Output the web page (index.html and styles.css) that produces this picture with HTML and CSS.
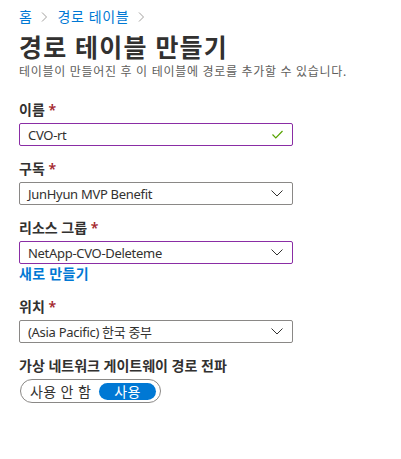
FILE: index.html
```html
<!DOCTYPE html>
<html lang="ko">
<head>
    <meta charset="UTF-8">
    <meta name="viewport" content="width=device-width, initial-scale=1.0">
    <title>경로 테이블 만들기</title>
    <link rel="stylesheet" href="styles.css">
</head>
<body>
    <div class="page">
        <nav class="breadcrumb">
            <a href="#">홈</a>
            <svg class="sep" width="7" height="10" viewBox="0 0 7 10"><path d="M1 0.5 L5.5 5 L1 9.5" fill="none" stroke="#a19f9d" stroke-width="1"/></svg>
            <a href="#">경로 테이블</a>
            <svg class="sep" width="7" height="10" viewBox="0 0 7 10"><path d="M1 0.5 L5.5 5 L1 9.5" fill="none" stroke="#a19f9d" stroke-width="1"/></svg>
        </nav>
        <h1 class="title">경로 테이블 만들기</h1>
        <p class="subtitle">테이블이 만들어진 후 이 테이블에 경로를 추가할 수 있습니다.</p>

        <div class="field">
            <label class="label">이름 <span class="req">*</span></label>
            <div class="box box-active">
                <span class="value">CVO-rt</span>
                <svg class="icon" width="11" height="9" viewBox="0 0 11 9"><path d="M0.5 4.5 L3.8 7.8 L10.5 1" fill="none" stroke="#57a300" stroke-width="1.2"/></svg>
            </div>
        </div>

        <div class="field">
            <label class="label">구독 <span class="req">*</span></label>
            <div class="box">
                <span class="value">JunHyun MVP Benefit</span>
                <svg class="icon" width="12" height="7" viewBox="0 0 12 7"><path d="M0.5 0.5 L6 6 L11.5 0.5" fill="none" stroke="#323130" stroke-width="1"/></svg>
            </div>
        </div>

        <div class="field">
            <label class="label">리소스 그룹 <span class="req">*</span></label>
            <div class="box box-active">
                <span class="value">NetApp-CVO-Deleteme</span>
                <svg class="icon" width="12" height="7" viewBox="0 0 12 7"><path d="M0.5 0.5 L6 6 L11.5 0.5" fill="none" stroke="#323130" stroke-width="1"/></svg>
            </div>
            <a class="link" href="#">새로 만들기</a>
        </div>

        <div class="field">
            <label class="label">위치 <span class="req">*</span></label>
            <div class="box">
                <span class="value">(Asia Pacific) 한국 중부</span>
                <svg class="icon" width="12" height="7" viewBox="0 0 12 7"><path d="M0.5 0.5 L6 6 L11.5 0.5" fill="none" stroke="#323130" stroke-width="1"/></svg>
            </div>
        </div>

        <div class="field">
            <label class="label">가상 네트워크 게이트웨이 경로 전파</label>
            <div class="toggle">
                <span class="toggle-option">사용 안 함</span>
                <span class="toggle-option toggle-on">사용</span>
            </div>
        </div>
    </div>
</body>
</html>
```
FILE: styles.css
```css
body {
    margin: 0;
    padding: 0;
    font-family: "Noto Sans", "Noto Sans CJK KR", sans-serif;
    color: #323130;
    background-color: #fff;
}

.page {
    padding: 7px 0 0 19px;
    width: 274px;
}

.breadcrumb {
    display: flex;
    align-items: center;
    gap: 7px;
    font-size: 14px;
    line-height: 20px;
    height: 20px;
    letter-spacing: 0.6px;
}

.breadcrumb a {
    color: #0078d4;
    text-decoration: none;
}

.breadcrumb .sep {
    display: block;
    margin: 0 2px;
}

.title {
    margin: 4px 0 0;
    font-size: 25px;
    line-height: 32px;
    font-weight: 700;
    letter-spacing: 1.2px;
    color: #323130;
    white-space: nowrap;
}

.subtitle {
    margin: 0;
    font-size: 12px;
    line-height: 17px;
    letter-spacing: 0.7px;
    color: #605e5c;
    white-space: nowrap;
}

.field {
    margin-top: 20px;
}

.field + .field {
    margin-top: 13px;
}

.label {
    display: block;
    font-size: 14px;
    line-height: 20px;
    font-weight: 600;
    margin-bottom: 3px;
    white-space: nowrap;
}

.req {
    color: #a4262c;
}

.box {
    box-sizing: border-box;
    height: 23px;
    border: 1px solid #8a8886;
    border-radius: 2px;
    display: flex;
    align-items: center;
    justify-content: space-between;
    padding: 0 9px 0 8px;
    font-size: 13px;
}

.box-active {
    border-color: #8a2da5;
}

.value {
    white-space: nowrap;
    letter-spacing: -0.3px;
}

.icon {
    display: block;
}

.link {
    display: block;
    font-size: 14px;
    line-height: 20px;
    font-weight: 600;
    letter-spacing: 0.3px;
    color: #0078d4;
    text-decoration: none;
}

.toggle {
    box-sizing: border-box;
    display: inline-flex;
    align-items: center;
    height: 24px;
    margin-left: 1px;
    padding: 0 4px 0 9px;
    border: 1px solid #8a8886;
    border-radius: 12px;
    gap: 8px;
    font-size: 14px;
    letter-spacing: 0.4px;
}

.toggle-option {
    white-space: nowrap;
    line-height: 17px;
}

.toggle-on {
    background-color: #0078d4;
    color: #fff;
    border-radius: 9px;
    padding: 0 15px;
}
```
